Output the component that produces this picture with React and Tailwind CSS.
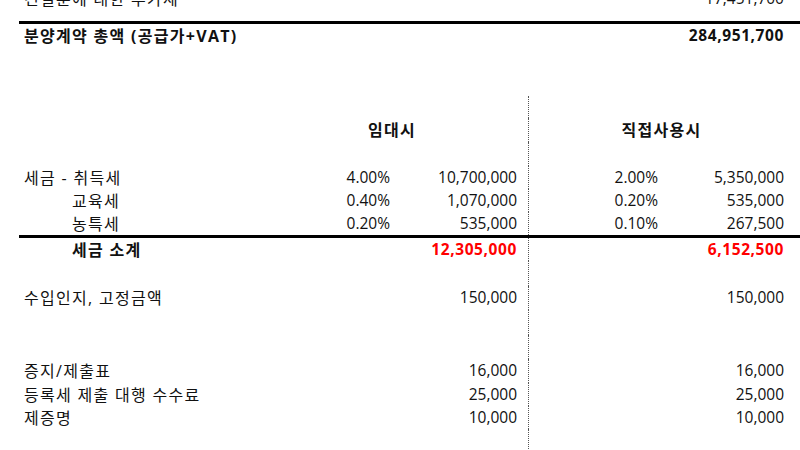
import React from 'react';

const GRID = 'grid grid-cols-[241px_135px_133px_134px_138px] items-center';
const KR = 'text-[16px] tracking-[1.3px] whitespace-nowrap';

function Row({ h, label, indent, bold, cells = [], red, dotted = true }) {
  const [p1, v1, p2, v2] = cells;
  const tone = red ? 'text-[#ff0000] font-bold tracking-[0.6px]' : '';
  return (
    <div className={`${GRID} ${h}`}>
      <div className={`${indent ? 'pl-[53px]' : 'pl-[5px]'} ${bold ? 'font-bold' : ''} ${KR}`}>
        {label}
      </div>
      <div className="pr-[5px] text-right">{p1}</div>
      <div className={`pr-[11px] text-right ${tone}`}>{v1}</div>
      <div
        className={`self-stretch flex items-center justify-end pr-[4px] ${
          dotted ? 'border-l border-dotted border-[#555]' : ''
        }`}
      >
        {p2}
      </div>
      <div className={`pr-[16px] text-right ${tone}`}>{v2}</div>
    </div>
  );
}

export default function App() {
  return (
    <div className="w-[800px] h-[450px] overflow-hidden bg-white text-[#111] text-[15.5px] leading-none font-['Open_Sans','Noto_Sans_CJK_KR',sans-serif]">
      <div className="ml-[19px] w-[781px]">
        {/* Top totals */}
        <div className="-mt-[12px]">
          <Row h="h-[22px]" label="건설분에 대한 부가세" cells={['', '', '', '17,451,700']} dotted={false} />
        </div>
        <div className="h-[11px]" />
        <div className="h-[3px] bg-black" />
        <div className={`${GRID} h-[24px] font-bold`}>
          <div className={`pl-[5px] ${KR}`}>분양계약 총액 (공급가+VAT)</div>
          <div />
          <div />
          <div />
          <div className="pr-[16px] text-right tracking-[0.6px]">284,951,700</div>
        </div>
        <div className="h-[48px]" />

        {/* Tax comparison */}
        <Row h="h-[22px]" />
        <div className={`${GRID} h-[24px] font-bold`}>
          <div />
          <div className={`col-span-2 text-center pr-[4px] ${KR}`}>임대시</div>
          <div className={`col-span-2 self-stretch flex items-center justify-center pr-[6px] border-l border-dotted border-[#555] ${KR}`}>
            직접사용시
          </div>
        </div>
        <Row h="h-[24px]" />
        <Row h="h-[23px]" label="세금 - 취득세" cells={['4.00%', '10,700,000', '2.00%', '5,350,000']} />
        <Row h="h-[23px]" label="교육세" indent cells={['0.40%', '1,070,000', '0.20%', '535,000']} />
        <Row h="h-[23px]" label="농특세" indent cells={['0.20%', '535,000', '0.10%', '267,500']} />
        <div className="h-[3px] bg-black" />
        <Row h="h-[23px]" label="세금 소계" indent bold red cells={['', '12,305,000', '', '6,152,500']} />
        <Row h="h-[25px]" />
        <Row h="h-[24px]" label="수입인지, 고정금액" cells={['', '150,000', '', '150,000']} />
        <Row h="h-[25px]" />
        <Row h="h-[24px]" />
        <Row h="h-[24px]" label="증지/제출표" cells={['', '16,000', '', '16,000']} />
        <Row h="h-[23px]" label="등록세 제출 대행 수수료" cells={['', '25,000', '', '25,000']} />
        <Row h="h-[23px]" label="제증명" cells={['', '10,000', '', '10,000']} />
        <Row h="h-[30px]" />
      </div>
    </div>
  );
}
